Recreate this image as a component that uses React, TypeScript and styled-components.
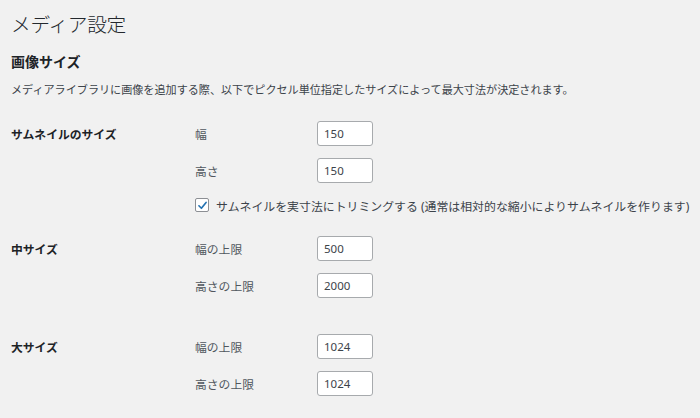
import styled, { createGlobalStyle } from 'styled-components';

const GlobalStyle = createGlobalStyle`
  html, body {
    margin: 0;
    padding: 0;
    background: #f1f1f1;
  }
  body {
    font-family: "Noto Sans", "Noto Sans CJK JP", sans-serif;
    color: #3c434a;
  }
`;

const Wrap = styled.div`
  padding: 12px 10px 0 11px;
`;

const Title = styled.h1`
  margin: 0;
  font-size: 19.7px;
  line-height: 25px;
  font-weight: 300;
  color: #23282d;
  letter-spacing: -0.3px;
`;

const SectionTitle = styled.h2`
  margin: 15px 0 0;
  font-size: 14px;
  line-height: 20px;
  font-weight: 700;
  color: #1d2327;
`;

const Description = styled.p`
  margin: 10px 0 0;
  font-size: 11.1px;
  line-height: 16px;
  color: #3c434a;
`;

const Table = styled.div`
  margin-top: 23px;
  display: flex;
  flex-direction: column;
`;

const Row = styled.div<{ $space: number }>`
  display: grid;
  grid-template-columns: 184px 1fr;
  padding-bottom: ${({ $space }) => $space}px;
`;

const RowLabel = styled.div`
  height: 25px;
  display: flex;
  align-items: center;
  font-size: 11.8px;
  font-weight: 700;
  color: #1d2327;
`;

const Fields = styled.div`
  display: flex;
  flex-direction: column;
  gap: 12px;
`;

const Field = styled.label`
  display: flex;
  align-items: center;
  height: 25px;
`;

const FieldName = styled.span`
  width: 122px;
  font-size: 11.8px;
  color: #50575e;
`;

const NumberInput = styled.input`
  box-sizing: border-box;
  width: 56px;
  height: 25px;
  padding: 0 6px;
  border: 1px solid #a7aaad;
  border-radius: 3px;
  background: #fff;
  font-family: "Noto Sans", sans-serif;
  font-size: 11.5px;
  color: #3c434a;
  outline: none;
`;

const CheckLine = styled.label`
  display: flex;
  align-items: center;
  height: 20px;
  gap: 7px;
  font-size: 11.9px;
  color: #3c434a;
  white-space: nowrap;
`;

const Box = styled.span`
  box-sizing: border-box;
  width: 14px;
  height: 14px;
  border: 1px solid #8c8f94;
  border-radius: 2px;
  background: #fff;
  display: flex;
  align-items: center;
  justify-content: center;
`;

type Dim = { name: string; value: string };

const sizes: { label: string; fields: Dim[]; crop?: boolean; space: number }[] = [
  {
    label: 'サムネイルのサイズ',
    fields: [
      { name: '幅', value: '150' },
      { name: '高さ', value: '150' },
    ],
    crop: true,
    space: 21,
  },
  {
    label: '中サイズ',
    fields: [
      { name: '幅の上限', value: '500' },
      { name: '高さの上限', value: '2000' },
    ],
    space: 36,
  },
  {
    label: '大サイズ',
    fields: [
      { name: '幅の上限', value: '1024' },
      { name: '高さの上限', value: '1024' },
    ],
    space: 0,
  },
];

const App = () => (
  <>
    <GlobalStyle />
    <Wrap>
      <Title>メディア設定</Title>
      <SectionTitle>画像サイズ</SectionTitle>
      <Description>
        メディアライブラリに画像を追加する際、以下でピクセル単位指定したサイズによって最大寸法が決定されます。
      </Description>
      <Table>
        {sizes.map((s) => (
          <Row key={s.label} $space={s.space}>
            <RowLabel>{s.label}</RowLabel>
            <Fields>
              {s.fields.map((f) => (
                <Field key={f.name}>
                  <FieldName>{f.name}</FieldName>
                  <NumberInput defaultValue={f.value} />
                </Field>
              ))}
              {s.crop && (
                <CheckLine>
                  <Box>
                    <svg width="11" height="11" viewBox="0 0 20 20">
                      <path
                        d="M3.5 10.5 L8 15 L16.5 4.5"
                        fill="none"
                        stroke="#2271b1"
                        strokeWidth="3"
                        strokeLinecap="round"
                        strokeLinejoin="round"
                      />
                    </svg>
                  </Box>
                  サムネイルを実寸法にトリミングする (通常は相対的な縮小によりサムネイルを作ります)
                </CheckLine>
              )}
            </Fields>
          </Row>
        ))}
      </Table>
    </Wrap>
  </>
);

export default App;
